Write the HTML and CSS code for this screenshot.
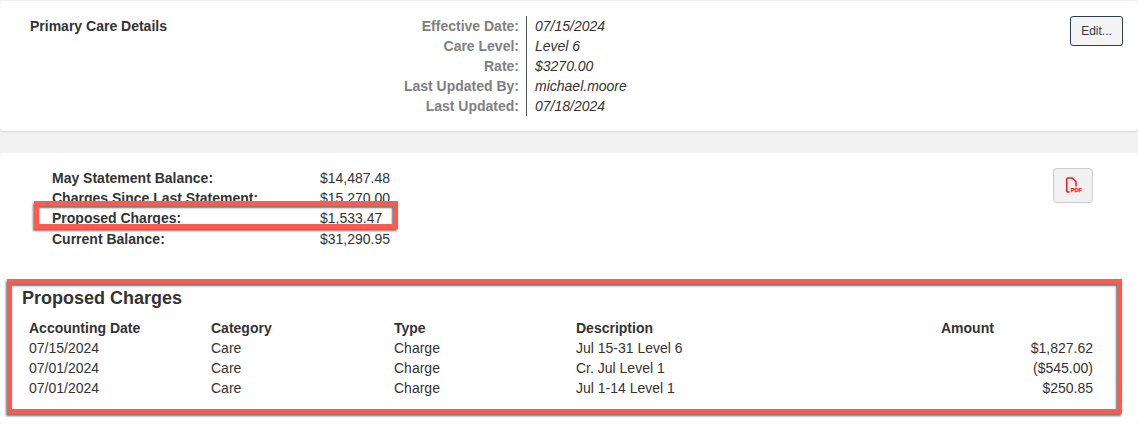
FILE: index.html
```html
<!DOCTYPE html>
<html lang="en">
<head>
<meta charset="utf-8">
<title>Primary Care Details</title>
<link rel="stylesheet" href="styles.css">
</head>
<body>
<section class="card card-top">
  <h2 class="care-title">Primary Care Details</h2>
  <dl class="care-details">
    <dt>Effective Date:</dt><dd>07/15/2024</dd>
    <dt>Care Level:</dt><dd>Level 6</dd>
    <dt>Rate:</dt><dd>$3270.00</dd>
    <dt>Last Updated By:</dt><dd>michael.moore</dd>
    <dt>Last Updated:</dt><dd>07/18/2024</dd>
  </dl>
  <button class="btn-edit" type="button">Edit...</button>
</section>
<section class="card card-bottom">
  <div class="summary-row">
    <dl class="balances">
      <dt>May Statement Balance:</dt><dd>$14,487.48</dd>
      <dt>Charges Since Last Statement:</dt><dd>$15,270.00</dd>
      <dt>Proposed Charges:</dt><dd>$1,533.47</dd>
      <dt class="balance-total">Current Balance:</dt><dd class="balance-total">$31,290.95</dd>
    </dl>
    <button class="btn-pdf" type="button" aria-label="PDF">
      <svg class="pdf-icon" width="16" height="17" viewBox="0 0 16 17" aria-hidden="true">
        <path d="M4.500 15H3a1.300 1.300 0 0 1-1.300-1.300V2.300A1.300 1.300 0 0 1 3 1h4.200l3.800 3.800V9.500" fill="none" stroke="#f5141e" stroke-width="1.500"/>
        <text x="5.800" y="14.700" class="pdf-label">PDF</text>
      </svg>
    </button>
  </div>
  <div class="charges">
    <h3 class="charges-title">Proposed Charges</h3>
    <table class="charges-table">
      <thead>
        <tr><th>Accounting Date</th><th>Category</th><th>Type</th><th>Description</th><th>Amount</th></tr>
      </thead>
      <tbody>
        <tr><td>07/15/2024</td><td>Care</td><td>Charge</td><td>Jul 15-31 Level 6</td><td class="amount">$1,827.62</td></tr>
        <tr><td>07/01/2024</td><td>Care</td><td>Charge</td><td>Cr. Jul Level 1</td><td class="amount">($545.00)</td></tr>
        <tr><td>07/01/2024</td><td>Care</td><td>Charge</td><td>Jul 1-14 Level 1</td><td class="amount">$250.85</td></tr>
      </tbody>
    </table>
  </div>
</section>
<div class="callout callout-row"></div>
<div class="callout callout-table"></div>
</body>
</html>
```

FILE: styles.css
```css
* { box-sizing: border-box; }
html, body { margin: 0; height: 424px; overflow: hidden; }
body {
  background: #f2f2f2;
  font-family: "Liberation Sans", Arial, sans-serif;
  font-size: 14px;
  line-height: 20px;
  color: #333;
  padding-top: 1px;
  position: relative;
}
.card {
  background: #fff;
  border-radius: 4px;
}
.card-top {
  height: 130px;
  display: flex;
  align-items: flex-start;
  padding: 15px 15px 0 30px;
  box-shadow: 0 1px 2px rgba(0,0,0,.1);
  margin-bottom: 22px;
}
.care-title {
  margin: 0;
  width: 300px;
  font-size: 14px;
  font-weight: bold;
  line-height: 20px;
}
.care-details {
  margin: 0;
  display: grid;
  grid-template-columns: 196px 1fr;
  flex: 1;
}
.care-details dt {
  font-weight: bold;
  color: #808080;
  text-align: right;
  padding-right: 7px;
}
.care-details dd {
  margin: 0;
  font-style: italic;
  padding-left: 8px;
  border-left: 1px solid #555;
}
.btn-edit {
  width: 53px;
  height: 30px;
  padding: 0;
  background: #f4f4f4;
  border: 1px solid #2c3e50;
  border-radius: 3px;
  color: #2c3e50;
  font: 12px "Liberation Sans", Arial, sans-serif;
}
.card-bottom {
  height: 271px;
  padding-top: 15px;
}
.summary-row {
  display: flex;
  justify-content: space-between;
  align-items: flex-start;
  padding: 0 45px 0 52px;
}
.balances {
  margin: 0;
  display: grid;
  grid-template-columns: 268px 100px;
}
.balances dt { font-weight: bold; }
.balances dd { margin: 0; }
.balances .balance-total { padding-top: 1px; }
.btn-pdf {
  width: 40px;
  height: 35px;
  padding: 0;
  display: flex;
  align-items: center;
  justify-content: center;
  background: #f1f1f1;
  border: 1px solid #ccc;
  border-radius: 4px;
}
.pdf-icon { overflow: visible; }
.pdf-label {
  font: bold 5.500px "Liberation Sans", Arial, sans-serif;
  fill: #f5141e;
  stroke: #f5141e;
  stroke-width: .25px;
}
.charges {
  margin-top: 39px;
  padding: 0 45px 0 22px;
}
.charges-title {
  margin: 0 0 10px;
  font-size: 18px;
  line-height: 20px;
  font-weight: bold;
}
.charges-table {
  margin-left: 7px;
  width: 1064px;
  table-layout: fixed;
  border-collapse: collapse;
}
.charges-table th, .charges-table td {
  padding: 0;
  height: 20px;
  text-align: left;
  font-weight: normal;
}
.charges-table th { font-weight: bold; }
.charges-table th:nth-child(1) { width: 182px; }
.charges-table th:nth-child(2) { width: 183px; }
.charges-table th:nth-child(3) { width: 182px; }
.charges-table th:nth-child(4) { width: 365px; }
.charges-table .amount { text-align: right; }
.callout {
  position: absolute;
  border: 5px solid #ff5a4d;
  box-shadow: -1px 2px 2px rgba(0,0,0,.55), inset -1px 2px 2px rgba(0,0,0,.55);
}
.callout-row { left: 34px; top: 201px; width: 364px; height: 28px; }
.callout-table { left: 7px; top: 279px; width: 1115px; height: 135px; }
```
